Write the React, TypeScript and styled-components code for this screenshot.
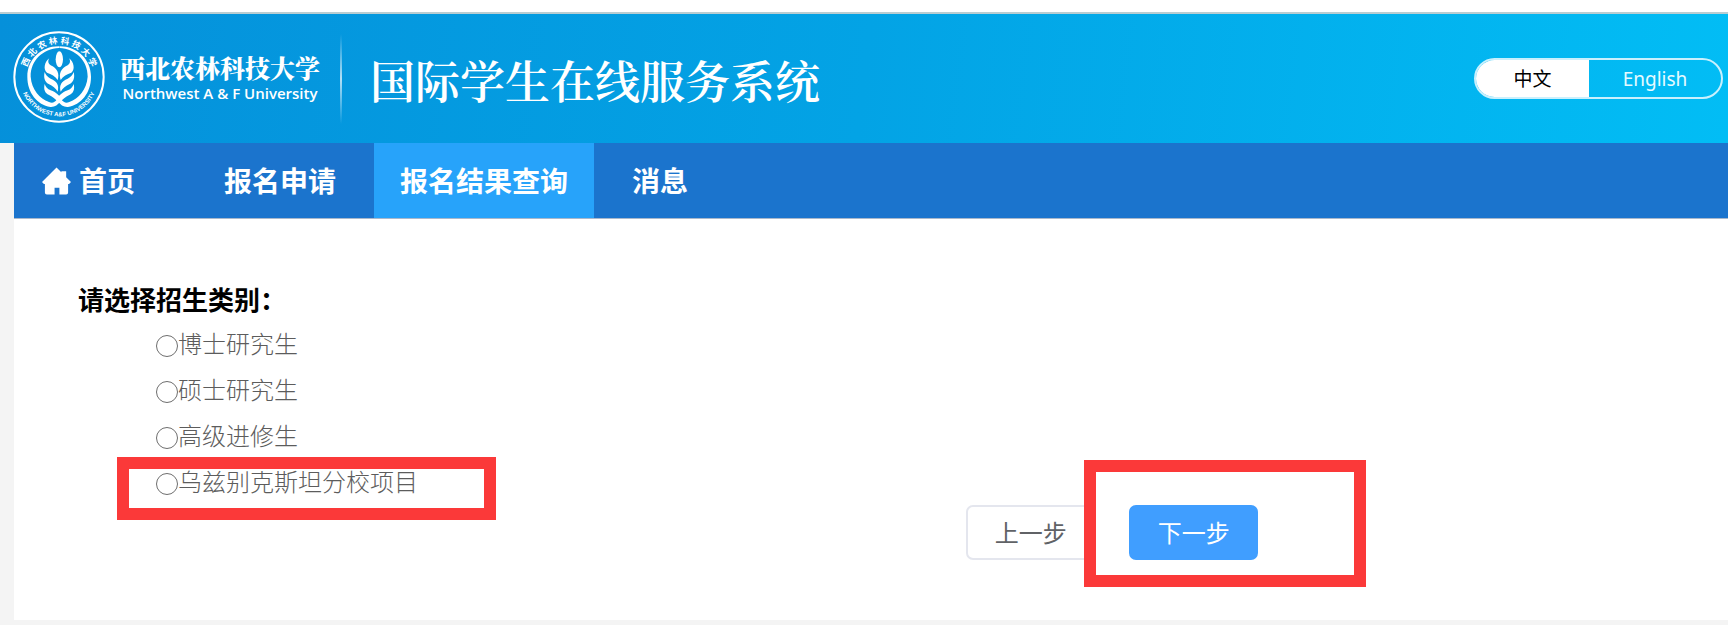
import React, { useState } from "react";
import styled, { createGlobalStyle } from "styled-components";

const GlobalStyle = createGlobalStyle`
  *, *::before, *::after { box-sizing: border-box; }
  body {
    margin: 0;
    background: #f4f4f4;
    font-family: "Noto Sans", "Noto Sans CJK SC", sans-serif;
    color: #5c5c5c;
  }
  button, input { font: inherit; margin: 0; }
`;

const Page = styled.div`
  display: flex;
  flex-direction: column;
  min-height: 100vh;
  border-top: 12px solid #fff;
`;

const Header = styled.header`
  display: flex;
  align-items: center;
  height: 131px;
  padding: 0 5px 0 13px;
  border-top: 2px solid #b9cdd2;
  background: linear-gradient(97deg, #0590da 0%, #03a3e5 50%, #02bdf5 100%);
  color: #fff;
`;

const Brand = styled.a`
  display: flex;
  align-items: center;
  gap: 15px;
  padding-bottom: 4px;
  color: #fff;
  text-decoration: none;
  white-space: nowrap;
`;

const Seal = styled.svg`
  width: 92px;
  height: 92px;
  flex: none;
`;

const BrandText = styled.span`
  display: flex;
  flex-direction: column;
  align-items: center;
  width: 200px;
`;

const ChineseName = styled.span`
  font-family: "Noto Serif CJK SC", "Noto Sans CJK SC", serif;
  font-size: 25px;
  font-weight: 900;
  line-height: 32px;
`;

const EnglishName = styled.span`
  font-family: "Open Sans", "Noto Sans", sans-serif;
  font-size: 15px;
  font-weight: 600;
  line-height: 20px;
`;

const Divider = styled.span`
  width: 2px;
  height: 90px;
  margin: 0 28px 0 20px;
  background: linear-gradient(rgba(255, 255, 255, 0), rgba(255, 255, 255, 0.7) 50%, rgba(255, 255, 255, 0));
`;

const SystemTitle = styled.h1`
  margin: 0;
  padding-top: 2px;
  font-family: "Noto Serif CJK SC", "Noto Sans CJK SC", serif;
  font-size: 45px;
  font-weight: 600;
  line-height: 60px;
  white-space: nowrap;
`;

const LanguageSwitch = styled.div`
  display: flex;
  width: 249px;
  height: 41px;
  margin-left: auto;
  overflow: hidden;
  border: 2px solid #c9f0fd;
  border-radius: 21px;
`;

const LanguageButton = styled.button<{ $active: boolean; $grow: number }>`
  flex: ${(p) => p.$grow} 1 0;
  padding: 0;
  border: 0;
  background: ${(p) => (p.$active ? "#fff" : "transparent")};
  color: ${(p) => (p.$active ? "#000" : "#e6faff")};
  font-size: 19px;
  line-height: 36px;
  cursor: pointer;
`;

const Main = styled.div`
  margin-left: 14px;
`;

const Nav = styled.nav`
  display: flex;
  gap: 12px;
  height: 76px;
  border-bottom: 1px solid #a9b8cc;
  background: #1b74cd;
`;

const NavLink = styled.a<{ $active?: boolean; $home?: boolean }>`
  display: flex;
  align-items: center;
  gap: 8px;
  min-width: ${(p) => (p.$home ? "172px" : "0")};
  padding: 0 ${(p) => (p.$home ? "28px" : "26px")};
  background: ${(p) => (p.$active ? "#27a3fa" : "transparent")};
  color: #fff;
  font-size: 28px;
  font-weight: 700;
  line-height: 40px;
  text-decoration: none;
  white-space: nowrap;
`;

const HomeIcon = styled.svg`
  width: 29px;
  height: 28px;
  fill: #fff;
`;

const Panel = styled.form`
  padding: 60px 0 60px;
  background: #fff;
`;

const Categories = styled.fieldset`
  display: flex;
  flex-direction: column;
  min-width: 0;
  margin: 0;
  padding: 0 0 0 142px;
  border: 0;
`;

const Question = styled.legend`
  margin-left: -78px;
  padding: 0;
  color: #000;
  font-size: 26px;
  font-weight: 700;
  line-height: 42px;
`;

const Option = styled.label`
  position: relative;
  display: flex;
  align-items: center;
  align-self: flex-start;
  height: 46px;
  font-size: 24px;
  line-height: 46px;
  font-weight: 300;
  white-space: nowrap;
`;

const Radio = styled.input`
  appearance: none;
  width: 22px;
  height: 22px;
  margin-top: 3px;
  border: 1px solid #6e6e6e;
  border-radius: 50%;
  background: #fff;

  &:checked {
    border-color: #409eff;
    box-shadow: inset 0 0 0 4px #fff;
    background: #409eff;
  }
`;

const Mark = styled.span<{ $top: number; $left: number; $width: number; $height: number }>`
  position: absolute;
  top: ${(p) => p.$top}px;
  left: ${(p) => p.$left}px;
  width: ${(p) => p.$width}px;
  height: ${(p) => p.$height}px;
  border: 12px solid #fb3939;
  pointer-events: none;
`;

const Actions = styled.div`
  display: grid;
  grid-template-columns: 5fr 4fr;
`;

const ActionButtons = styled.div`
  position: relative;
  grid-column: 2;
  display: flex;
  gap: 34px;
`;

const StepButton = styled.button<{ $primary?: boolean }>`
  width: 129px;
  height: 55px;
  padding: 0;
  border: 2px solid ${(p) => (p.$primary ? "#409eff" : "#e4e6ee")};
  border-radius: 7px;
  background: ${(p) => (p.$primary ? "#409eff" : "#fff")};
  color: ${(p) => (p.$primary ? "#fff" : "#606266")};
  font-size: 24px;
  line-height: 40px;
  cursor: pointer;
`;

function UniversitySeal() {
  const leaves = (
    <>
      <path d="M149 113C134 124 130 147 142 156C155 160 167 166 174 178C180 160 174 144 153 134C145 129 144 120 149 113Z" />
      <path d="M135 154C131 171 135 184 147 190C159 196 168 202 174 213C179 193 172 182 153 174C143 169 138 163 135 154Z" />
      <path d="M135 190C131 206 136 218 148 223C160 229 167 235 178 247L187 239C182 226 170 215 153 209C143 205 138 199 135 190Z" />
      <path d="M178 77C122 77 83 118 83 168C83 217 113 252 152 259C165 260 174 253 183 242L173 236C164 247 157 248 148 244C120 233 96 207 93 168C92 120 130 84 178 82Z" />
    </>
  );
  return (
    <Seal viewBox="40 31 276 276" aria-hidden="true">
      <defs>
        <path id="seal-top" d="M78 169A100 100 0 0 1 278 169" />
        <path id="seal-bottom" d="M60 169A118 118 0 0 0 296 169" />
      </defs>
      <circle cx="178" cy="169" r="134" fill="none" stroke="#fff" strokeWidth="6" />
      <g fill="#fff">
        <ellipse cx="179" cy="116" rx="11" ry="24" />
        {leaves}
        <g transform="translate(357 0) scale(-1 1)">{leaves}</g>
      </g>
      <g fill="#fff" fontWeight="700" textAnchor="middle">
        <text fontSize="26">
          <textPath href="#seal-top" startOffset="50%">西 北 农 林 科 技 大 学</textPath>
        </text>
        <text fontSize="18" fontFamily="Liberation Sans, sans-serif">
          <textPath href="#seal-bottom" startOffset="50%">NORTHWEST A&amp;F UNIVERSITY</textPath>
        </text>
      </g>
    </Seal>
  );
}

const categories = ["博士研究生", "硕士研究生", "高级进修生", "乌兹别克斯坦分校项目"];

export default function App() {
  const [language, setLanguage] = useState("zh");
  return (
    <>
      <GlobalStyle />
      <Page>
        <Header>
          <Brand href="#">
            <UniversitySeal />
            <BrandText>
              <ChineseName>西北农林科技大学</ChineseName>
              <EnglishName>Northwest A &amp; F University</EnglishName>
            </BrandText>
          </Brand>
          <Divider />
          <SystemTitle>国际学生在线服务系统</SystemTitle>
          <LanguageSwitch>
            <LanguageButton type="button" $grow={113} $active={language === "zh"} onClick={() => setLanguage("zh")}>
              中文
            </LanguageButton>
            <LanguageButton type="button" $grow={132} $active={language === "en"} onClick={() => setLanguage("en")}>
              English
            </LanguageButton>
          </LanguageSwitch>
        </Header>
        <Main>
          <Nav>
            <NavLink href="#" $home>
              <HomeIcon viewBox="0 0 30 28" aria-hidden="true">
                <path d="M15 0L20 5V4H25V10L30 15L28 17H27V26Q27 28 25 28H18V21H13V28H5Q3 28 3 26V17H2L0 15Z" />
              </HomeIcon>
              首页
            </NavLink>
            <NavLink href="#">报名申请</NavLink>
            <NavLink href="#" $active>
              报名结果查询
            </NavLink>
            <NavLink href="#">消息</NavLink>
          </Nav>
          <Panel onSubmit={(e) => e.preventDefault()}>
            <Categories>
              <Question>请选择招生类别：</Question>
              {categories.map((name, index) => (
                <Option key={name}>
                  <Radio type="radio" name="category" value={name} />
                  {name}
                  {index === categories.length - 1 && <Mark $top={-2} $left={-39} $width={379} $height={63} />}
                </Option>
              ))}
            </Categories>
            <Actions>
              <ActionButtons>
                <StepButton type="button">上一步</StepButton>
                <StepButton type="submit" $primary>
                  下一步
                </StepButton>
                <Mark $top={-45} $left={118} $width={282} $height={127} />
              </ActionButtons>
            </Actions>
          </Panel>
        </Main>
      </Page>
    </>
  );
}
